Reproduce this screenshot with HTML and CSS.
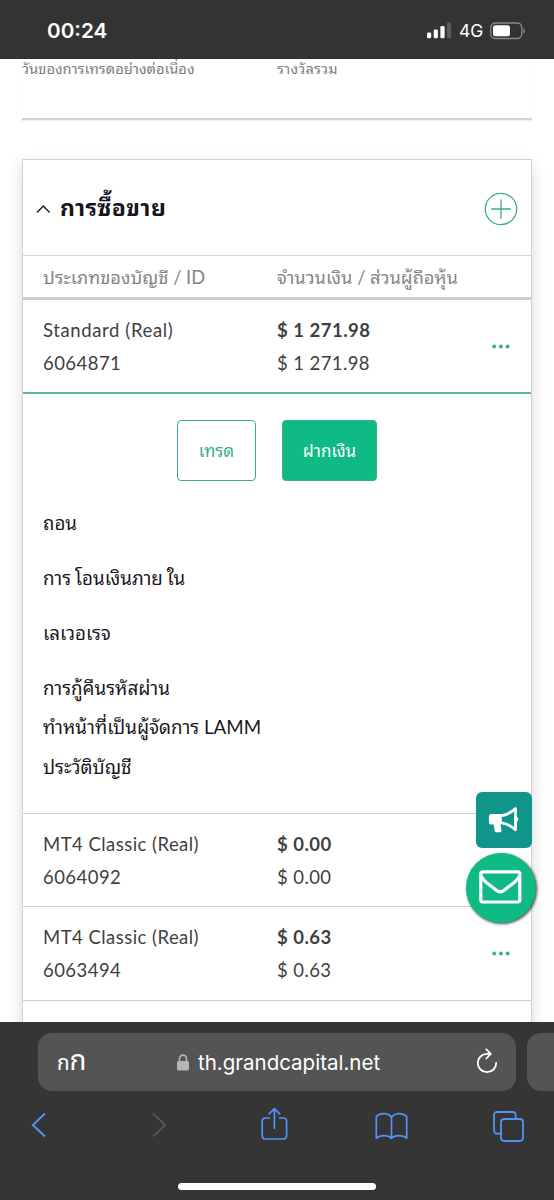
FILE: index.html
```html
<!DOCTYPE html>
<html lang="th">
<head>
<meta charset="utf-8">
<title>th.grandcapital.net</title>
<link rel="stylesheet" href="styles.css">
</head>
<body>
<div class="phone">
  <header class="status">
    <span class="clock">00:24</span>
    <div class="indicators">
      <svg class="signal" width="25" height="17" viewBox="0 0 25 17"><rect x="0" y="10.5" width="4.2" height="5.7" rx="1.3" fill="#fff"/><rect x="6.7" y="7.5" width="4.2" height="8.7" rx="1.3" fill="#fff"/><rect x="13.4" y="4" width="4.2" height="12.2" rx="1.3" fill="#fff"/><rect x="20" y="0.5" width="4.2" height="15.7" rx="1.3" fill="#5c5c5c"/></svg>
      <span class="network">4G</span>
      <svg class="battery" width="36" height="18" viewBox="0 0 36 18"><rect x="0.8" y="1" width="31" height="15.5" rx="4.5" fill="none" stroke="#8b8b8b" stroke-width="1.3"/><rect x="3" y="3.2" width="17" height="11.1" rx="2.4" fill="#fff"/><path d="M33.3 6.2c2 .8 2 4.400 0 5.200z" fill="#8b8b8b"/></svg>
    </div>
  </header>

  <main class="page">
    <section class="summary">
      <span class="sum-days">วันของการเทรดอย่างต่อเนื่อง</span>
      <span class="sum-reward">รางวัลรวม</span>
    </section>

    <section class="card">
      <div class="card-head">
        <svg class="chevron" width="15" height="10" viewBox="0 0 15 10"><path d="M1 8.600 7.300 2l6.300 6.600" fill="none" stroke="#222" stroke-width="1.500"/></svg>
        <h2 class="title">การซื้อขาย</h2>
        <svg class="add" width="34" height="34" viewBox="0 0 34 34" fill="none" stroke="#38ac85" stroke-width="1.300"><circle cx="17" cy="17" r="15.700"/><path d="M17 7.200v19.600M7.200 17h19.600"/></svg>
      </div>
      <div class="row table-head">
        <span class="th-type">ประเภทของบัญชี / ID</span>
        <span class="th-amount">จำนวนเงิน / ส่วนผู้ถือหุ้น</span>
      </div>
      <div class="row account open">
        <div class="cell"><span class="std">Standard (Real)</span><span class="num">6064871</span></div>
        <div class="cell"><b class="money">$ 1 271.98</b><span class="money">$ 1 271.98</span></div>
        <svg class="dots" width="18" height="5" viewBox="0 0 18 5" fill="#35b588"><circle cx="2.200" cy="2.500" r="2"/><circle cx="8.900" cy="2.500" r="2"/><circle cx="15.600" cy="2.500" r="2"/></svg>
      </div>
      <div class="details">
        <div class="buttons">
          <a class="btn trade">เทรด</a>
          <a class="btn deposit">ฝากเงิน</a>
        </div>
        <ul class="links">
          <li class="wide">ถอน</li>
          <li class="wide">การ<span class="vowel">โอนเงินภาย</span><span class="vowel">ใน</span></li>
          <li class="wide">เลเวอเรจ</li>
          <li>การกู้คืนรหัสผ่าน</li>
          <li>ทำหน้าที่เป็นผู้จัดการ LAMM</li>
          <li>ประวัติบัญชี</li>
        </ul>
      </div>
      <div class="row account">
        <div class="cell"><span class="mt">MT4 Classic (Real)</span><span class="num">6064092</span></div>
        <div class="cell"><b class="money">$ 0.00</b><span class="money">$ 0.00</span></div>
      </div>
      <div class="row account">
        <div class="cell"><span class="mt">MT4 Classic (Real)</span><span class="num">6063494</span></div>
        <div class="cell"><b class="money">$ 0.63</b><span class="money">$ 0.63</span></div>
        <svg class="dots" width="18" height="5" viewBox="0 0 18 5" fill="#35b588"><circle cx="2.200" cy="2.500" r="2"/><circle cx="8.900" cy="2.500" r="2"/><circle cx="15.600" cy="2.500" r="2"/></svg>
      </div>
    </section>
  </main>

  <div class="floating">
    <div class="promo">
      <svg width="32" height="28" viewBox="0 0 32 28"><path d="M3.600 8h10.200v10.200h-1.300l1.100 6.800a1.200 1.200 0 0 1-1.200 1.300H8.300a1.600 1.600 0 0 1-1.600-1.300l-1-6.400H3.600A2.800 2.800 0 0 1 .9 15.900v-5.200A2.700 2.700 0 0 1 3.600 8z" fill="#fff"/><path d="M13.500 9.600c5-.6 9-2.800 14-7v21.200c-5-4.200-9-6.400-14-7" fill="none" stroke="#fff" stroke-width="2.800" stroke-linejoin="round"/><path d="M28 10.200a3.400 3.400 0 0 1 0 6z" fill="#fff" stroke="#fff"/></svg>
    </div>
    <div class="mail">
      <svg width="43" height="34" viewBox="0 0 43 34" fill="none" stroke="#fff" stroke-width="3.200" stroke-linejoin="round"><rect x="1.800" y="1.800" width="39" height="30.200" rx="2"/><path d="M2 5.500c1 3.500 3 5 6 7.400l9 7.100c3 2.600 5.500 2.600 8.500 0l9-7.100c3-2.400 5-3.900 6-7.400"/></svg>
    </div>
  </div>

  <footer class="browser">
    <div class="tabs">
      <div class="address">
        <span class="aa"><span class="aa-small">ก</span><span class="aa-big">ก</span></span>
        <div class="site">
          <svg width="12" height="17" viewBox="0 0 12 17"><rect x="0" y="7" width="12" height="9.600" rx="1.800" fill="#b5b5ba"/><path d="M2.500 8V4.600a3.500 3.500 0 0 1 7 0V8" fill="none" stroke="#b5b5ba" stroke-width="1.600"/></svg>
          <span class="host">th.grandcapital.net</span>
        </div>
        <svg class="reload" width="22" height="26" viewBox="0 0 22 26" fill="none" stroke="#fff" stroke-width="1.800" stroke-linecap="round" stroke-linejoin="round"><path d="M14 5.800h-3a9.200 9.200 0 1 0 9.200 9.200"/><path d="M10.300 1.300 14.800 5.800l-4.500 4.700"/></svg>
      </div>
      <div class="next-tab"></div>
    </div>
    <nav class="tools">
      <svg class="back" width="15" height="26" viewBox="0 0 15 26" fill="none" stroke="#5293f4" stroke-width="2"><path d="M14 1.500 1.900 13 14 24.500"/></svg>
      <svg class="forward" width="15" height="26" viewBox="0 0 15 26" fill="none" stroke="#5c5c5c" stroke-width="1.700"><path d="M1 1.500 13.100 13 1 24.500"/></svg>
      <svg class="share" width="27" height="34" viewBox="0 0 27 34" fill="none" stroke="#5293f4" stroke-width="1.700" stroke-linejoin="round"><path d="M9 11H4.500A3.300 3.300 0 0 0 1.200 14.300v14.400A3.300 3.300 0 0 0 4.500 32h17.800a3.300 3.300 0 0 0 3.300-3.300V14.300A3.300 3.300 0 0 0 22.300 11H18M13.400 22V1.800M7.600 7.400l5.800-5.800 5.800 5.800"/></svg>
      <svg class="book" width="33" height="28" viewBox="0 0 33 28" fill="none" stroke="#5293f4" stroke-width="1.700" stroke-linejoin="round"><path d="M16.500 5.500C14 .8 5.500.2 1.300 4.500v21.700c4-3.500 12.200-3.500 15.200.2 3-3.700 11.200-3.700 15.200-.2V4.500C27.500.2 19 .8 16.500 5.500zv21"/></svg>
      <svg class="windows" width="31" height="31" viewBox="0 0 31 31" fill="none" stroke="#5293f4" stroke-width="1.800"><path d="M8 22.700H4.200A3.200 3.200 0 0 1 1 19.500V4.200A3.200 3.200 0 0 1 4.200 1h15.300a3.200 3.200 0 0 1 3.200 3.200V8"/><rect x="8" y="8" width="22" height="22" rx="3.200"/></svg>
    </nav>
    <div class="home"></div>
  </footer>
</div>
</body>
</html>
```
FILE: styles.css
```css
* { box-sizing: border-box; }
body { margin: 0; background: #fff; font-family: Lato, "Noto Sans Thai Looped", Loma, Garuda, Waree, "Noto Serif Thai", "Noto Sans", sans-serif; color: #3f3f3f; }
svg { display: block; flex: none; }
.phone { width: 554px; height: 1200px; display: flex; flex-direction: column; overflow: hidden; position: relative; }

.status { height: 59px; flex: none; background: #333; color: #fff; display: flex; justify-content: space-between; padding: 0 28px 0 47px; font-family: Inter, sans-serif; }
.clock { font-size: 20.700px; font-weight: 600; line-height: 61px; }
.indicators { display: flex; align-items: flex-start; padding-top: 22px; }
.network { font-size: 17.500px; line-height: 18px; margin-left: 7px; width: 24px; white-space: nowrap; }
.battery { margin-left: 7px; }

.page { flex: 1; min-height: 0; overflow: hidden; padding: 0 22px; }
.summary { display: grid; grid-template-columns: 255px 1fr; height: 61px; border-bottom: 2px solid #d4d4d4; box-shadow: 0 1px 1px #eee; color: #7d7d7d; font-size: 14.700px; line-height: 19px; white-space: nowrap; }
.sum-reward { letter-spacing: .15px; }
.card { margin-top: 39px; height: 900px; border: 1.500px solid #d3d3d3; box-shadow: 0 5px 14px rgba(0,0,0,.15); }
.card-head { height: 96px; border-bottom: 1px solid #d3d3d3; display: flex; align-items: center; padding: 3px 13px 0 13px; }
.title { margin: 0 auto 0 9px; font-size: 23px; letter-spacing: .4px; line-height: 32px; color: #15151c; font-weight: 700; padding-bottom: 4px; white-space: nowrap; }
.row { display: grid; grid-template-columns: 234px 1fr auto; align-items: center; padding: 0 21px 0 20px; white-space: nowrap; }
.table-head { height: 44px; border-bottom: 3px solid #d0d0d0; color: #858585; font-size: 18.300px; padding-bottom: 2px; }
.account { height: 93.500px; border-bottom: 1.500px solid #cfcfcf; font-size: 18.500px; line-height: 33px; }
.account.open { border-bottom: 2px solid #58b79a; }
.cell { display: flex; flex-direction: column; align-items: flex-start; padding-top: 2px; }
.std { letter-spacing: .62px; }
.mt { letter-spacing: .46px; }
.num { letter-spacing: .45px; }
.money { letter-spacing: .4px; }
b.money { letter-spacing: .5px; }
.open .dots { margin-top: 2px; }
.details { height: 420px; border-bottom: 1px solid #cfcfcf; padding-top: 26px; }
.buttons { display: flex; gap: 26px; padding-left: 154px; }
.btn { height: 61px; border: 1.500px solid #3eae87; border-radius: 4px; display: flex; align-items: center; justify-content: center; padding-bottom: 2px; font-size: 17px; color: #3eae87; white-space: nowrap; }
.trade { width: 79px; }
.deposit { width: 95px; background: #10ba84; color: #fff; }
.links { list-style: none; margin: 22px 0 0; padding: 0 20px; color: #18181d; font-size: 18.750px; white-space: nowrap; }
.links li { height: 39.500px; line-height: 39.500px; }
.links .wide { height: 55px; }
.vowel { padding-left: 4px; }

.floating { position: absolute; left: 466px; top: 792px; width: 71px; }
.promo { width: 56px; height: 56px; margin-left: 10px; border-radius: 6px; background: #10958a; display: flex; align-items: center; justify-content: center; }
.mail { width: 70px; height: 70px; margin-top: 5px; border-radius: 50%; background: #10ba84; box-shadow: 1px 1px 3px rgba(0,0,0,.75); display: flex; align-items: center; justify-content: center; padding: 0 2px 2px 0; }

.browser { flex: none; height: 178px; background: #353535; display: flex; flex-direction: column; }
.tabs { display: flex; gap: 11px; padding: 11px 0 0 38px; }
.address { flex: none; width: 478px; height: 58px; border-radius: 14px; background: #545454; display: grid; grid-template-columns: 120px 1fr auto; align-items: center; padding: 0 18px 0 19px; color: #fff; }
.next-tab { flex: none; width: 60px; height: 58px; border-radius: 14px; background: #545454; }
.aa { display: flex; align-items: baseline; font-family: "Noto Sans Thai", "Noto Sans", sans-serif; line-height: 36px; padding-top: 2px; }
.aa-small { font-size: 21px; }
.aa-big { font-size: 28px; }
.site { display: flex; align-items: center; gap: 9px; }
.host { font: 20.500px/30px Inter, sans-serif; white-space: nowrap; padding-top: 1px; }
.reload { margin-top: -2px; }
.tools { height: 66px; margin-top: 21px; display: flex; align-items: flex-start; padding-left: 31px; }
.forward { margin-left: 106px; }
.share { margin: -5px 0 0 94px; }
.book { margin-left: 87px; }
.windows { margin: -1px 0 0 85px; }
.home { width: 198px; height: 7px; border-radius: 4px; background: #fff; margin: 5px 0 0 178px; }
```
